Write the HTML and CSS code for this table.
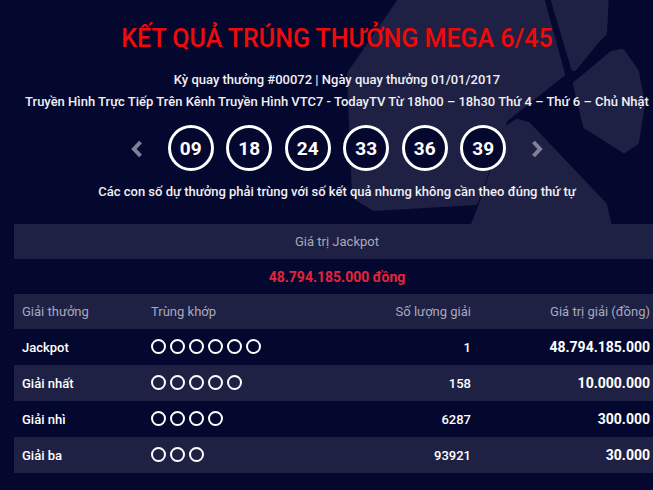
FILE: index.html
```html
<!DOCTYPE html>
<html lang="vi">
<head>
<meta charset="utf-8">
<title>Kết quả Mega 6/45</title>
<link rel="stylesheet" href="styles.css">
</head>
<body>
<svg class="bg-star" width="653" height="490" viewBox="0 0 653 490" aria-hidden="true">
  <g class="blade">
    <polygon points="405,-6 540,-6 562,74 505,119 475,202 374,208 355,196 350,74"/>
    <polygon points="552,-6 606,-6 604,33 596,41 574,68"/>
    <polygon points="576,84 612,54 622,52 636,72 642,104 636,142 624,150 586,126"/>
    <polygon points="517,122 528,125 604,205 612,240 468,240 482,204 508,128"/>
  </g>
</svg>
<main class="wrap">
  <h1 class="title">KẾT QUẢ TRÚNG THƯỞNG MEGA 6/45</h1>
  <p class="meta first">Kỳ quay thưởng #00072 | Ngày quay thưởng 01/01/2017</p>
  <p class="meta">Truyền Hình Trực Tiếp Trên Kênh Truyền Hình VTC7 - TodayTV Từ 18h00 – 18h30 Thứ 4 – Thứ 6 – Chủ Nhật</p>
  <div class="balls">
    <svg class="chev" width="12" height="18" viewBox="0 0 12 18"><path d="M9.5 2 L3 9 L9.5 16"/></svg>
    <span class="ball">09</span>
    <span class="ball">18</span>
    <span class="ball">24</span>
    <span class="ball">33</span>
    <span class="ball">36</span>
    <span class="ball">39</span>
    <svg class="chev" width="12" height="18" viewBox="0 0 12 18"><path d="M2.5 2 L9 9 L2.5 16"/></svg>
  </div>
  <p class="note">Các con số dự thưởng phải trùng với số kết quả nhưng không cần theo đúng thứ tự</p>
  <section class="jackpot">
    <div class="jp-label">Giá trị Jackpot</div>
    <div class="jp-value">48.794.185.000 đồng</div>
  </section>
  <div class="prizes">
    <div class="row head">
      <span class="c1">Giải thưởng</span>
      <span class="c2">Trùng khớp</span>
      <span class="c3">Số lượng giải</span>
      <span class="c4">Giá trị giải (đồng)</span>
    </div>
    <div class="row">
      <span class="c1">Jackpot</span>
      <span class="c2 dots"><i></i><i></i><i></i><i></i><i></i><i></i></span>
      <span class="c3">1</span>
      <span class="c4">48.794.185.000</span>
    </div>
    <div class="row alt">
      <span class="c1">Giải nhất</span>
      <span class="c2 dots"><i></i><i></i><i></i><i></i><i></i></span>
      <span class="c3">158</span>
      <span class="c4">10.000.000</span>
    </div>
    <div class="row">
      <span class="c1">Giải nhì</span>
      <span class="c2 dots"><i></i><i></i><i></i><i></i></span>
      <span class="c3">6287</span>
      <span class="c4">300.000</span>
    </div>
    <div class="row alt">
      <span class="c1">Giải ba</span>
      <span class="c2 dots"><i></i><i></i><i></i></span>
      <span class="c3">93921</span>
      <span class="c4">30.000</span>
    </div>
  </div>
</main>
</body>
</html>
```
FILE: styles.css
```css
html, body {
  margin: 0;
  padding: 0;
}
body {
  background: #05082e;
  width: 653px;
  height: 490px;
  overflow: hidden;
  position: relative;
  font-family: Roboto, "Liberation Sans", Arial, sans-serif;
  color: #ffffff;
}
.bg-star {
  position: absolute;
  left: 0;
  top: 0;
  z-index: 0;
}
.blade polygon {
  fill: #1f2144;
  stroke: #1f2144;
  stroke-width: 6;
  stroke-linejoin: round;
}
.wrap {
  position: relative;
  z-index: 1;
  margin-left: 14px;
  width: 646px;
  padding-top: 25px;
}
.title {
  margin: 0;
  font-size: 25px;
  line-height: 28px;
  font-weight: 500;
  color: #f00a0a;
  text-align: center;
}
.meta {
  margin: 0;
  font-size: 13px;
  line-height: 22px;
  font-weight: 500;
  text-align: center;
  color: #f0f0f4;
}
.meta.first {
  margin-top: 16px;
}
.balls {
  margin-top: 12px;
  height: 46px;
  display: flex;
  justify-content: center;
  align-items: center;
  gap: 12.5px;
}
.chev {
  margin: 2px 12px 0;
}
.chev path {
  fill: none;
  stroke: #7f8197;
  stroke-width: 4;
  stroke-linecap: butt;
  stroke-linejoin: miter;
}
.ball {
  box-sizing: border-box;
  width: 46px;
  height: 46px;
  border: 3px solid #ffffff;
  border-radius: 50%;
  background: #05082e;
  display: flex;
  align-items: center;
  justify-content: center;
  font-size: 19px;
  font-weight: 700;
  color: #ffffff;
}
.note {
  margin: 10px 0 0;
  font-size: 13px;
  line-height: 22px;
  font-weight: 500;
  text-align: center;
  color: #f0f0f4;
}
.jackpot {
  margin-top: 21px;
}
.jp-label {
  height: 35px;
  background: #1f2144;
  display: flex;
  align-items: center;
  justify-content: center;
  font-size: 13px;
  color: #a7a9bb;
}
.jp-value {
  height: 35px;
  display: flex;
  align-items: center;
  justify-content: center;
  font-size: 14px;
  font-weight: 700;
  color: #e5233d;
}
.row {
  display: grid;
  grid-template-columns: 129px 1fr 170px 181px;
  height: 36px;
  align-items: center;
  font-size: 13px;
  font-weight: 500;
}
.row.head, .row.alt {
  background: #1f2144;
}
.row.head {
  height: 35px;
  font-weight: 400;
  color: #a7a9bb;
}
.c1 {
  padding-left: 8px;
}
.c2 {
  padding-left: 8px;
}
.c3 {
  text-align: right;
  padding-right: 8px;
}
.c4 {
  text-align: right;
  padding-right: 10px;
}
.row:not(.head) .c4 {
  font-weight: 700;
  font-size: 14px;
}
.dots {
  display: flex;
  gap: 4px;
  align-items: center;
  margin-top: -1px;
}
.dots i {
  box-sizing: border-box;
  width: 15px;
  height: 15px;
  border: 2.5px solid #ffffff;
  border-radius: 50%;
}
```
